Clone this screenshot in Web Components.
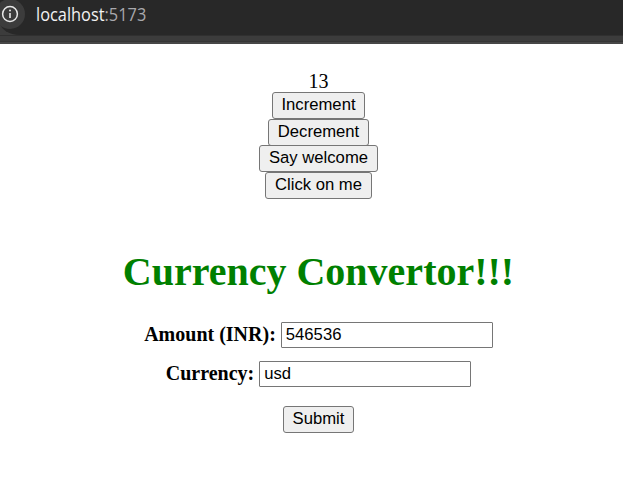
<!DOCTYPE html>
<html lang="en">
<head>
<meta charset="utf-8">
<title>Currency Convertor</title>
<style>
html,body{margin:0;height:100%;overflow:hidden;background:#fff;color:#000;font-family:"Liberation Serif",serif;font-size:20px}
</style>
</head>
<body>
<app-page></app-page>
<script>
const define = (name, html) => customElements.define(name, class extends HTMLElement {
  connectedCallback() {
    if (this.shadowRoot) return;
    const root = this.attachShadow({ mode: 'open' });
    const t = document.createElement('template');
    t.innerHTML = typeof html === 'function' ? html(this) : html;
    root.append(t.content.cloneNode(true));
  }
});

define('address-bar', `
<style>
:host{display:block;height:44px;background:linear-gradient(#303030 0 1px,#3c3c3c 1px 6px,#353535 6px 7px,#474747 7px 9px) 0 35px/100% 9px no-repeat,#3c3c3c;box-sizing:border-box}
.field{height:35px;background:#282828;border-bottom-left-radius:20px 13px;display:flex;align-items:flex-start}
.info{flex:none;width:30px;height:30px;margin:-1px 0 0 -5px;border-radius:50%;background:#3c3c3c;display:grid;place-items:center}
.url{margin:1px 0 0 10.5px;font:17.5px/26px "Open Sans","Noto Sans",sans-serif;color:#a9a9ad;white-space:nowrap}
.url ::slotted(*){color:#f2f2f2}
.text{display:inline-block;transform-origin:0 50%;transform:scaleX(.935)}
</style>
<div class="field">
  <span class="info"><svg width="18" height="18" viewBox="0 0 18 18" fill="none" stroke="#e8e8e8"><circle cx="9" cy="9" r="7.4" stroke-width="1.5"/><path d="M9 8v5" stroke-width="1.6"/><circle cx="9" cy="5.6" r="1" fill="#e8e8e8" stroke="none"/></svg></span>
  <span class="url"><span class="text"><slot name="host"></slot><slot></slot></span></span>
</div>`);

define('action-button', `
<style>
:host{display:block;width:var(--w);height:27px}
button{display:block;width:100%;height:100%;box-sizing:border-box;margin:0;padding:0 0 1px;border:1px solid #767676;border-radius:3px;background:#efefef;color:#000;font:16.667px/22px "Liberation Sans",sans-serif;white-space:nowrap}
</style>
<button type="button"><slot></slot></button>`);

define('labeled-field', el => `
<style>
:host{display:flex;align-items:center;justify-content:center;gap:5px;height:26px}
label{font-weight:bold;line-height:23px;white-space:nowrap;padding-bottom:1px}
input{width:212px;height:26px;box-sizing:border-box;margin:0;padding:0 4px;border:1px solid #767676;border-radius:1px;background:#fff;color:#000;font:16.667px "Liberation Sans",sans-serif}
</style>
<label for="i"><slot></slot></label><input id="i" type="text" value="${el.getAttribute('value')}">`);

define('counter-panel', `
<style>
:host{display:flex;flex-direction:column;align-items:center}
.count{line-height:23px;margin-bottom:-1px}
.stack{display:flex;flex-direction:column;align-items:center}
.stack > *{margin-bottom:-.5px}
</style>
<div class="count">13</div>
<div class="stack">
<action-button style="--w:93px">Increment</action-button>
<action-button style="--w:101px">Decrement</action-button>
<action-button style="--w:119px">Say welcome</action-button>
<action-button style="--w:107px">Click on me</action-button>
</div>`);

define('currency-form', `
<style>
:host{display:flex;flex-direction:column;align-items:center}
h1{margin:0 0 27px;font-size:40px;line-height:46px;color:green;white-space:nowrap}
labeled-field{margin-bottom:13px}
action-button{margin-top:6px}
</style>
<h1>Currency Convertor!!!</h1>
<labeled-field value="546536">Amount (INR):</labeled-field>
<labeled-field value="usd">Currency:</labeled-field>
<action-button style="--w:71px">Submit</action-button>`);

define('app-page', `
<style>
:host{display:block}
main{display:flex;flex-direction:column;width:637px;padding-top:26px}
currency-form{margin-top:51px}
</style>
<address-bar><span slot="host">localhost</span>:5173</address-bar>
<main><counter-panel></counter-panel><currency-form></currency-form></main>`);
</script>
</body>
</html>
